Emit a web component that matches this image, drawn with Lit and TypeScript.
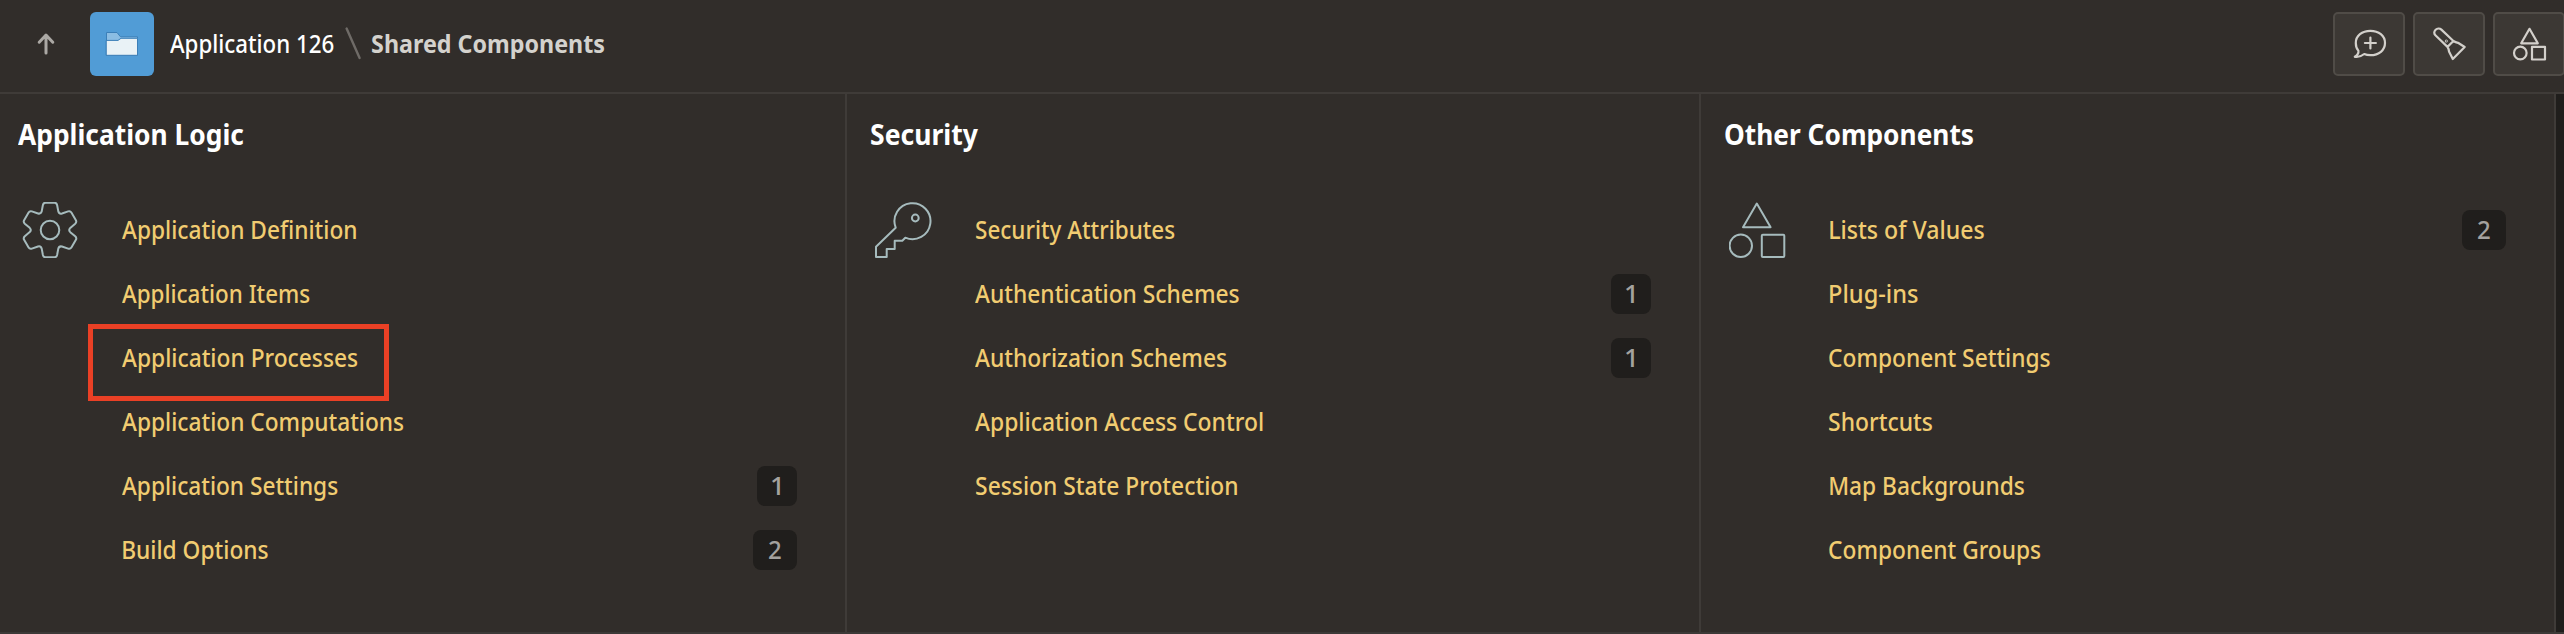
import { LitElement, html, css, svg } from 'lit';
import { customElement, property } from 'lit/decorators.js';
import { styleMap } from 'lit/directives/style-map.js';

const FAMILY = '"Noto Sans", "Open Sans", sans-serif';
const ctx = document.createElement('canvas').getContext('2d')!;

/** A single line of text, set to exactly `width` pixels. */
@customElement('fit-text')
export class FitText extends LitElement {
  @property() text = '';
  @property({ type: Number }) width = 0;
  @property({ type: Number }) size = 25;
  @property({ type: Number }) weight = 500;

  static styles = css`
    :host { display: block; white-space: pre; flex: none; }
    .box { display: block; }
    .ink { display: inline-block; transform-origin: 0 50%; }
  `;

  render() {
    ctx.font = `${this.weight} ${this.size}px ${FAMILY}`;
    const m = ctx.measureText(this.text);
    const k = this.width / (m.actualBoundingBoxRight + m.actualBoundingBoxLeft);
    const box = { width: `${this.width}px`, fontSize: `${this.size}px`, fontWeight: `${this.weight}` };
    const ink = { transform: `translateX(${m.actualBoundingBoxLeft * k}px) scaleX(${k})` };
    return html`<span class="box" style=${styleMap(box)}><span class="ink" style=${styleMap(ink)}>${this.text}</span></span>`;
  }
}

interface Item { label: string; width: number; inset?: number; count?: number; marked?: boolean }
interface Section { title: string; width: number; icon: unknown; items: Item[] }

const tooth = [0, 60, 120, 180, 240, 300].map((deg, i) => {
  const a = (deg * Math.PI) / 180;
  const p = (x: number, y: number) =>
    `${(28 + x * Math.cos(a) - y * Math.sin(a)).toFixed(2)} ${(28 + x * Math.sin(a) + y * Math.cos(a)).toFixed(2)}`;
  return `${i ? '' : `M${p(-8.3, -18.6)}`}L${p(-7.1, -25)}Q${p(-6.6, -27.3)} ${p(-4.5, -27.3)}L${p(4.5, -27.3)}Q${p(6.6, -27.3)} ${p(7.1, -25)}L${p(8.3, -18.6)}Q${p(9.2, -15.7)} ${p(12, -16.5)}`;
}).join('') + 'Z';

const gear = svg`<path d=${tooth}/><circle cx="28" cy="28" r="9.3"/>`;
const key = svg`<path d="M20.7 25.7L1 44.7V55H11.7V47H19.7V38.7H27.3L30.3 35.7A18 18 0 1 0 20.7 25.7Z"/><circle cx="40.3" cy="16" r="3.4"/>`;
const shapes = svg`<path d="M14.8 1.6L28.6 25.2H1Z" transform="translate(13)"/><circle cx="11.8" cy="43.8" r="11.2"/><rect x="32.8" y="32.8" width="22.5" height="22.2" rx="1"/>`;

const sections: Section[] = [
  { title: 'Application Logic', width: 225.5, icon: gear, items: [
    { label: 'Application Definition', width: 234 },
    { label: 'Application Items', width: 188 },
    { label: 'Application Processes', width: 236, marked: true },
    { label: 'Application Computations', width: 282 },
    { label: 'Application Settings', width: 216, count: 1 },
    { label: 'Build Options', width: 145.5, inset: 1, count: 2 },
  ] },
  { title: 'Security', width: 107, icon: key, items: [
    { label: 'Security Attributes', width: 199, inset: 1 },
    { label: 'Authentication Schemes', width: 264.5, count: 1 },
    { label: 'Authorization Schemes', width: 252, count: 1 },
    { label: 'Application Access Control', width: 287.5 },
    { label: 'Session State Protection', width: 261, inset: 1 },
  ] },
  { title: 'Other Components', width: 248, icon: shapes, items: [
    { label: 'Lists of Values', width: 154.5, inset: 1, count: 2 },
    { label: 'Plug-ins', width: 88.3, inset: 1 },
    { label: 'Component Settings', width: 221.5 },
    { label: 'Shortcuts', width: 103.7 },
    { label: 'Map Backgrounds', width: 194.7, inset: 1 },
    { label: 'Component Groups', width: 212 },
  ] },
];

@customElement('app-root')
export class AppRoot extends LitElement {
  static styles = css`
    :host {
      display: flex; flex-direction: column; box-sizing: border-box;
      width: 100%; height: 634px; overflow: hidden;
      background: #312d2a; color: #fff;
      font-family: "Noto Sans", "Open Sans", sans-serif; line-height: 36px;
    }
    * { box-sizing: border-box; }
    svg { display: block; flex: none; fill: none; stroke-linejoin: round; stroke-linecap: round; }
    header {
      display: flex; align-items: flex-start; flex: none; height: 94px;
      padding: 12px 0 0 37px; border-bottom: 2px solid #3f3b38;
    }
    .up { stroke: #aba8a4; stroke-width: 3; }
    .app {
      width: 64px; height: 64px; margin: 0 16px 0 35px; flex: none;
      border-radius: 6px; background: #519cd6;
    }
    .crumb { padding-top: 13px; }
    .current { color: #d4d2cd; }
    .slash { stroke: #6f6b67; stroke-width: 2.4; }
    .actions { display: flex; gap: 8px; margin-left: auto; margin-right: -1px; flex: none; }
    .action {
      width: 72px; height: 64px; padding: 0; border: 2px solid #504c47;
      border-radius: 5px; background: #3c3834;
    }
    .action svg { margin: -2px; stroke: #d3d0cb; stroke-width: 2.2; }
    main {
      display: grid; grid-template-columns: 847px 854px 855px 1fr;
      flex: 1; border-bottom: 2px solid #3c3937;
    }
    section { border-right: 2px solid #3f3b38; padding: 22px 48px 0 18px; }
    section + section { padding-left: 24px; }
    h2 { margin: 0; height: 36px; font-weight: 700; }
    .body { display: flex; padding-top: 46px; }
    .glyph { margin: 4px 0 0 4px; stroke: #a6bbbd; stroke-width: 2; }
    ul { list-style: none; margin: 0; padding: 0 0 0 43px; flex: 1; }
    li { position: relative; display: flex; align-items: center; height: 64px; }
    a { display: block; color: #f1cc71; padding-bottom: 2px; text-decoration: none; }
    .in1 { padding-left: 1px; }
    .badge {
      display: flex; align-items: center; justify-content: center;
      width: 44px; height: 40px; margin-left: auto; padding-bottom: 2px;
      border-radius: 8px; background: #201e1c; color: #a4a29f;
    }
    .badge.one { width: 40px; padding-right: 1px; }
    .mark {
      position: absolute; left: -34px; top: -2px; width: 301px; height: 77px;
      border: 5px solid #ea4025;
    }
    aside { background: #201e1c; }
  `;

  private section(s: Section) {
    return html`<section>
      <h2><fit-text .text=${s.title} .width=${s.width} .size=${28} .weight=${700}></fit-text></h2>
      <div class="body">
        <svg class="glyph" width="57" height="56" viewBox="0 0 57 56">${s.icon}</svg>
        <ul>${s.items.map((i) => html`<li>
          <a class=${i.inset ? 'in1' : ''}><fit-text .text=${i.label} .width=${i.width}></fit-text></a>
          ${i.count ? html`<span class="badge ${i.count === 1 ? 'one' : ''}">
            <fit-text .text=${String(i.count)} .width=${i.count === 1 ? 8.4 : 12.5} .weight=${500}></fit-text></span>` : ''}
          ${i.marked ? html`<span class="mark"></span>` : ''}
        </li>`)}</ul>
      </div>
    </section>`;
  }

  render() {
    return html`
      <header>
        <svg class="up" width="18" height="64" viewBox="0 0 18 64"><path d="M9 41V23.5M2.2 30.2L9 23L15.8 30.2"/></svg>
        <div class="app"><svg width="64" height="64" viewBox="0 0 64 64">
          <path d="M16.5 43V20.5H27L30.5 24.8H47.5V43Z" fill="#8bbde3" stroke="#3b7fb8" stroke-width="1"/>
          <path d="M16.5 28.4H28L31 26.3H47.5V43.3H16.5Z" fill="#e9f2f6" stroke="#3b7fb8" stroke-width="1"/>
        </svg></div>
        <fit-text class="crumb" .text=${'Application 126'} .width=${164}></fit-text>
        <svg class="slash" width="38" height="64" viewBox="0 0 38 64"><path d="M12.6 16.5L25.6 46"/></svg>
        <fit-text class="crumb current" .text=${'Shared Components'} .width=${232.5} .weight=${700}></fit-text>
        <div class="actions">
          <button class="action"><svg width="72" height="64" viewBox="0 0 72 64">
            <path d="M25.4 38.7C23.4 36.6 22.8 33.8 22.8 31C22.8 23.7 29 18.9 37.4 18.9S52 23.7 52 31S46 43.2 37.4 43.2C35 43.2 33 42.8 31.2 42C28.6 44.1 25 45.4 21.8 44.8C24.6 43.2 25.8 41.6 25.4 38.7ZM37.4 25.5V36.5M31.9 31H42.9"/>
          </svg></button>
          <button class="action"><svg width="72" height="64" viewBox="0 0 72 64">
            <path d="M22.4 23.3L34.5 34.9L40.4 29L28.4 17.6C26.7 16 24.2 16.2 22.6 17.7C20.9 19.3 20.8 21.7 22.4 23.3ZM40.4 29Q42.5 30.4 45 30.8L51.7 35L39.8 47L36 39.4Q35.8 37 34.5 34.9"/>
            <circle cx="33.3" cy="29" r=".4"/>
          </svg></button>
          <button class="action"><svg width="72" height="64" viewBox="0 0 72 64">
            <path d="M36.5 16.8L44.8 31.3H28.2Z"/><circle cx="27.3" cy="41" r="6.3"/><rect x="39" y="34.8" width="13" height="12.7"/>
          </svg></button>
        </div>
      </header>
      <main>${sections.map((s) => this.section(s))}<aside></aside></main>
    `;
  }
}
